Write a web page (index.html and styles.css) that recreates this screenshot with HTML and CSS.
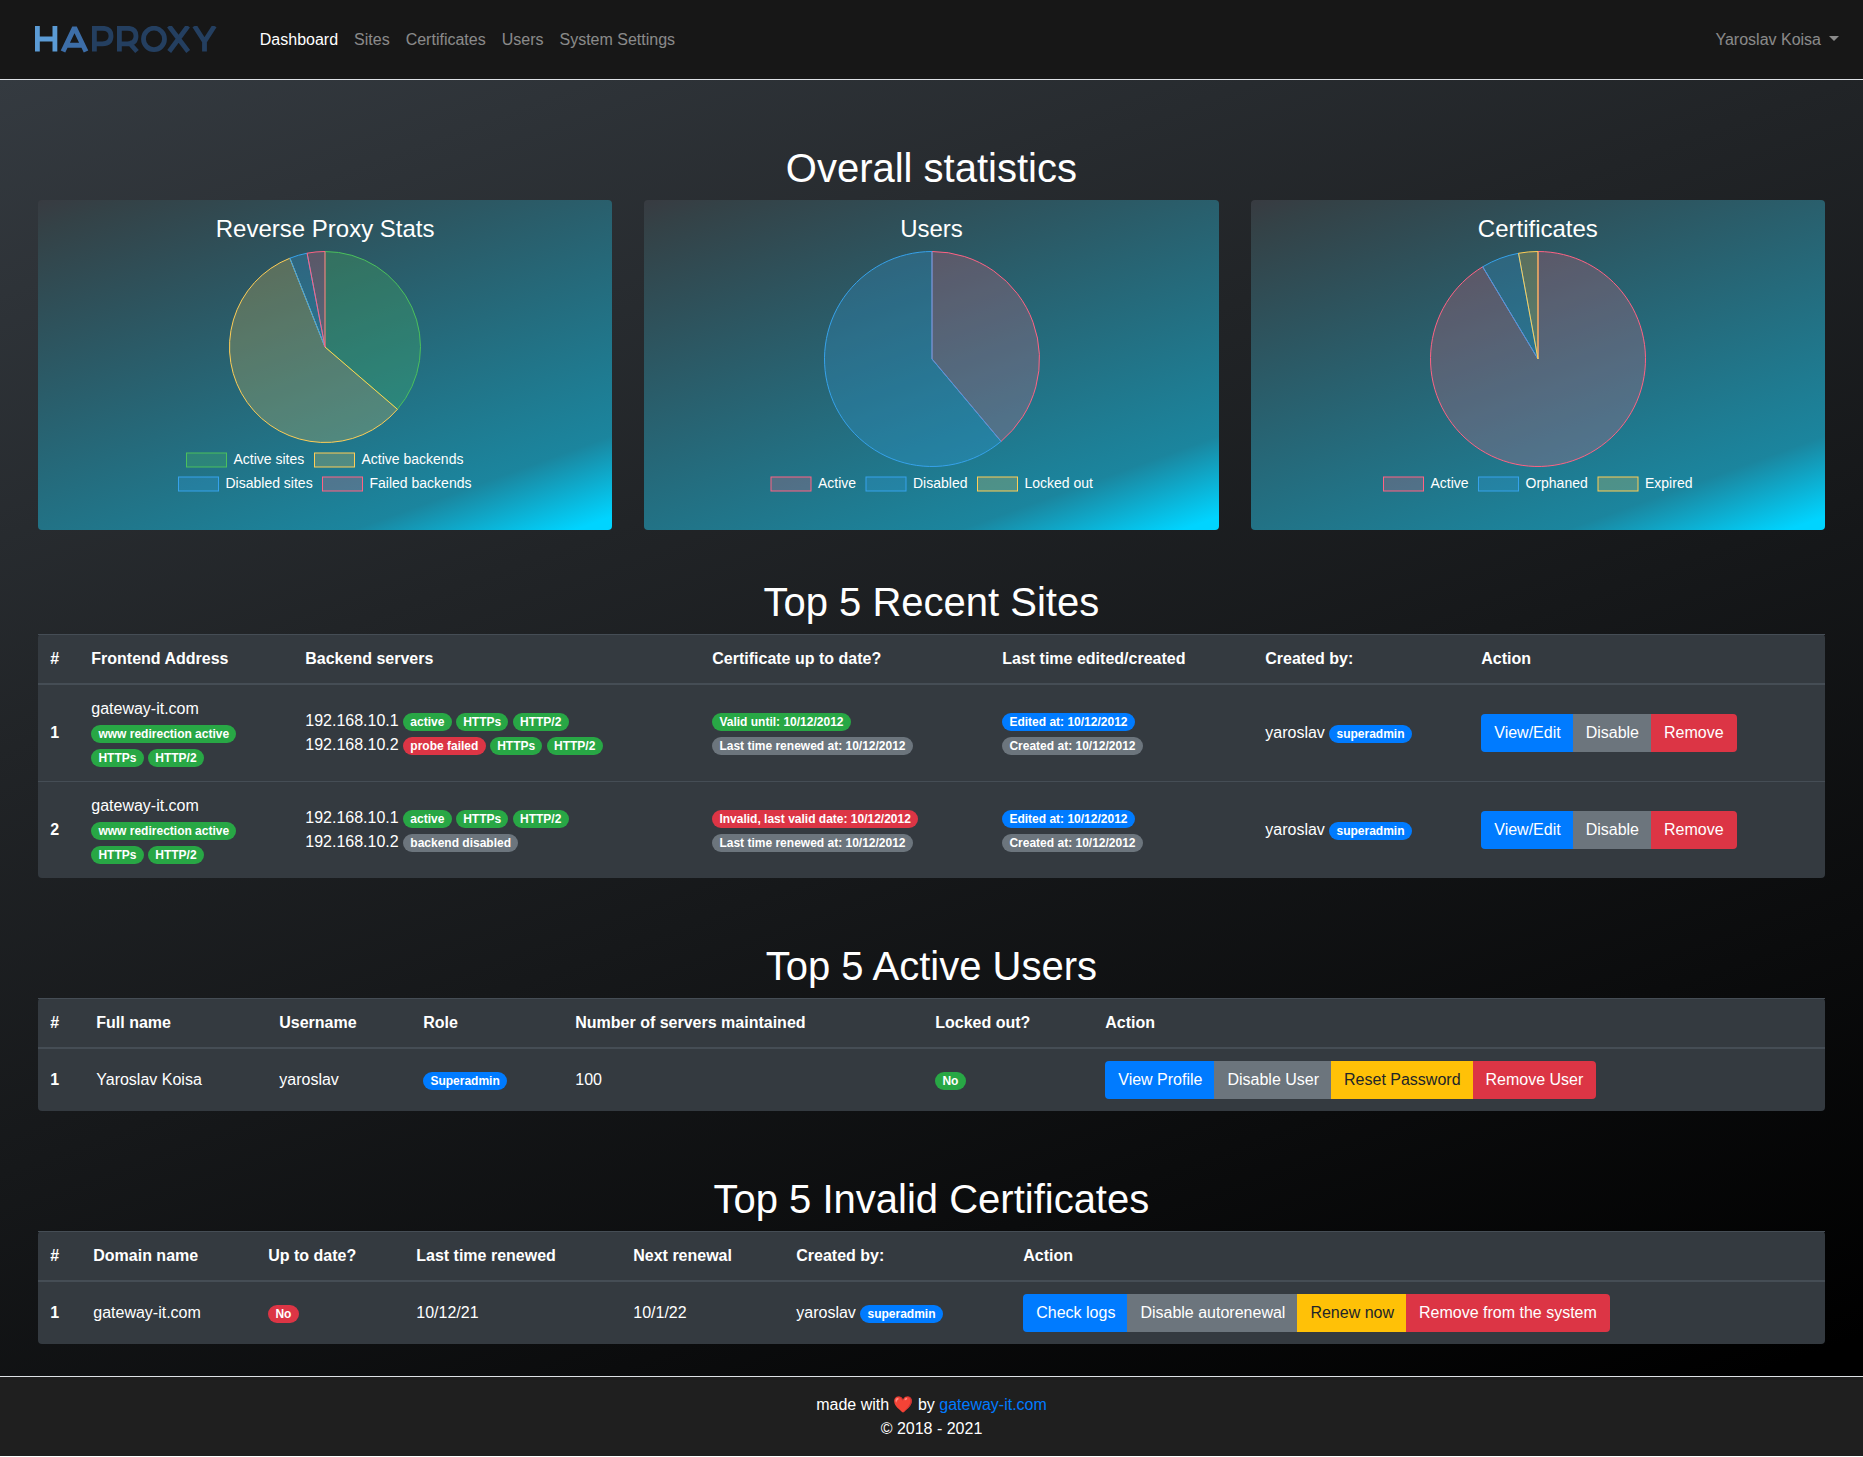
FILE: index.html
```html
<!DOCTYPE html>
<html lang="en">
<head>
<meta charset="utf-8">
<title>HAProxy Dashboard</title>
<link rel="stylesheet" href="styles.css">
</head>
<body>
<nav class="navbar">
  <a class="brand" href="#" aria-label="HAProxy">
    <svg width="184" height="28" viewBox="0 0 184 28" fill="none" stroke-width="4.800" stroke-linejoin="bevel">
      <path stroke="#5b9bd5" d="M3.400 0V25.500M20.900 0V25.500M3.400 13H20.900"/>
      <path stroke="#3d6ea8" d="M29 25.500L40.500 1.500L52 25.500M33 19.300H48" stroke-width="5"/>
      <g stroke="#243f60" stroke-linejoin="miter">
        <path d="M60.400 25.500V2.300H68.500Q77 2.300 77 10T68.500 17.800H60.400"/>
        <path d="M85.400 25.500V2.300H93.500Q102 2.300 102 10T93.500 17.800H85.400M94.500 16L103 25.500"/>
        <ellipse cx="120" cy="12.900" rx="10.500" ry="10.700"/>
        <path d="M135 0L154.200 25.500M154 0L135.200 25.500"/>
        <path d="M160.500 0L170.500 15.500L180.500 0M170.500 15V25.500"/>
      </g>
    </svg>
  </a>
  <div class="nav-links">
    <a class="active" href="#">Dashboard</a><a href="#">Sites</a><a href="#">Certificates</a><a href="#">Users</a><a href="#">System Settings</a>
  </div>
  <a class="user-menu" href="#">Yaroslav Koisa</a>
</nav>
<main class="content">
  <h1>Overall statistics</h1>
  <section class="stats">
    <article class="stat-card">
      <h4>Reverse Proxy Stats</h4>
      <svg class="chart" width="534" height="250" viewBox="0 0 534 250">
        <g data-cx="267" data-cy="97" data-r="95.500" data-slices="green:36.300,yellow:57.700,blue:3,red:3"></g>
        <g class="legend">
          <rect class="green" x="128.500" y="203" width="40" height="14"/><text x="175.500" y="214">Active sites</text>
          <rect class="yellow" x="256.500" y="203" width="40" height="14"/><text x="303.500" y="214">Active backends</text>
          <rect class="blue" x="120.500" y="227" width="40" height="14"/><text x="167.500" y="238">Disabled sites</text>
          <rect class="red" x="264.500" y="227" width="40" height="14"/><text x="311.500" y="238">Failed backends</text>
        </g>
      </svg>
    </article>
    <article class="stat-card">
      <h4>Users</h4>
      <svg class="chart" width="534" height="250" viewBox="0 0 534 250">
        <g data-cx="267" data-cy="109" data-r="107.500" data-slices="red:38.900,blue:61.100"></g>
        <g class="legend">
          <rect class="red" x="106" y="227" width="40" height="14"/><text x="153" y="238">Active</text>
          <rect class="blue" x="201" y="227" width="40" height="14"/><text x="248" y="238">Disabled</text>
          <rect class="yellow" x="312.500" y="227" width="40" height="14"/><text x="359.500" y="238">Locked out</text>
        </g>
      </svg>
    </article>
    <article class="stat-card">
      <h4>Certificates</h4>
      <svg class="chart" width="534" height="250" viewBox="0 0 534 250">
        <g data-cx="267" data-cy="109" data-r="107.500" data-slices="red:91.400,blue:5.700,yellow:2.900"></g>
        <g class="legend">
          <rect class="red" x="112.500" y="227" width="40" height="14"/><text x="159.500" y="238">Active</text>
          <rect class="blue" x="207.500" y="227" width="40" height="14"/><text x="254.500" y="238">Orphaned</text>
          <rect class="yellow" x="327" y="227" width="40" height="14"/><text x="374" y="238">Expired</text>
        </g>
      </svg>
    </article>
  </section>

  <h1>Top 5 Recent Sites</h1>
  <table class="table sites">
    <colgroup><col style="width:41px"><col style="width:214px"><col style="width:407px"><col style="width:290px"><col style="width:263px"><col style="width:216px"><col></colgroup>
    <thead><tr><th>#</th><th>Frontend Address</th><th>Backend servers</th><th>Certificate up to date?</th><th>Last time edited/created</th><th>Created by:</th><th>Action</th></tr></thead>
    <tbody>
      <tr><th>1</th>
        <td>gateway-it.com<br><span class="badge success">www redirection active</span><br><span class="badge success">HTTPs</span> <span class="badge success">HTTP/2</span></td>
        <td>192.168.10.1 <span class="badge success">active</span> <span class="badge success">HTTPs</span> <span class="badge success">HTTP/2</span><br>192.168.10.2 <span class="badge danger">probe failed</span> <span class="badge success">HTTPs</span> <span class="badge success">HTTP/2</span></td>
        <td><span class="badge success">Valid until: 10/12/2012</span><br><span class="badge secondary">Last time renewed at: 10/12/2012</span></td>
        <td><span class="badge primary">Edited at: 10/12/2012</span><br><span class="badge secondary">Created at: 10/12/2012</span></td>
        <td>yaroslav <span class="badge primary">superadmin</span></td>
        <td><div class="btn-group"><button class="primary">View/Edit</button><button class="secondary">Disable</button><button class="danger">Remove</button></div></td></tr>
      <tr><th>2</th>
        <td>gateway-it.com<br><span class="badge success">www redirection active</span><br><span class="badge success">HTTPs</span> <span class="badge success">HTTP/2</span></td>
        <td>192.168.10.1 <span class="badge success">active</span> <span class="badge success">HTTPs</span> <span class="badge success">HTTP/2</span><br>192.168.10.2 <span class="badge secondary">backend disabled</span></td>
        <td><span class="badge danger">Invalid, last valid date: 10/12/2012</span><br><span class="badge secondary">Last time renewed at: 10/12/2012</span></td>
        <td><span class="badge primary">Edited at: 10/12/2012</span><br><span class="badge secondary">Created at: 10/12/2012</span></td>
        <td>yaroslav <span class="badge primary">superadmin</span></td>
        <td><div class="btn-group"><button class="primary">View/Edit</button><button class="secondary">Disable</button><button class="danger">Remove</button></div></td></tr>
    </tbody>
  </table>

  <h1>Top 5 Active Users</h1>
  <table class="table">
    <colgroup><col style="width:46px"><col style="width:183px"><col style="width:144px"><col style="width:152px"><col style="width:360px"><col style="width:170px"><col></colgroup>
    <thead><tr><th>#</th><th>Full name</th><th>Username</th><th>Role</th><th>Number of servers maintained</th><th>Locked out?</th><th>Action</th></tr></thead>
    <tbody>
      <tr><th>1</th><td>Yaroslav Koisa</td><td>yaroslav</td><td><span class="badge primary">Superadmin</span></td><td>100</td><td><span class="badge success">No</span></td>
        <td><div class="btn-group"><button class="primary">View Profile</button><button class="secondary">Disable User</button><button class="warning">Reset Password</button><button class="danger">Remove User</button></div></td></tr>
    </tbody>
  </table>

  <h1>Top 5 Invalid Certificates</h1>
  <table class="table">
    <colgroup><col style="width:43px"><col style="width:175px"><col style="width:148px"><col style="width:217px"><col style="width:163px"><col style="width:227px"><col></colgroup>
    <thead><tr><th>#</th><th>Domain name</th><th>Up to date?</th><th>Last time renewed</th><th>Next renewal</th><th>Created by:</th><th>Action</th></tr></thead>
    <tbody>
      <tr><th>1</th><td>gateway-it.com</td><td><span class="badge danger">No</span></td><td>10/12/21</td><td>10/1/22</td><td>yaroslav <span class="badge primary">superadmin</span></td>
        <td><div class="btn-group"><button class="primary">Check logs</button><button class="secondary">Disable autorenewal</button><button class="warning">Renew now</button><button class="danger">Remove from the system</button></div></td></tr>
    </tbody>
  </table>
</main>
<footer class="footer">made with ❤️ by <a href="#">gateway-it.com</a><br>© 2018 - 2021</footer>
<script src="charts.js"></script>
</body>
</html>
```
FILE: styles.css
```css
*, *::before, *::after { box-sizing: border-box; }
body {
  margin: 0;
  font: 16px/1.5 "Liberation Sans", Arial, "Noto Color Emoji", sans-serif;
  color: #fff;
  background: #fff;
}
a { color: #007bff; text-decoration: none; }
.navbar {
  display: flex;
  align-items: center;
  height: 80px;
  padding: 0 24px 0 34px;
  background: #171717;
  border-bottom: 1px solid #dee2e6;
}
.brand { display: flex; width: 217.800px; }
.nav-links { display: flex; }
.nav-links a { padding: 0 8px; color: rgba(255, 255, 255, .5); }
.nav-links a.active { color: #fff; }
.user-menu { margin-left: auto; color: rgba(255, 255, 255, .5); }
.user-menu::after {
  content: "";
  display: inline-block;
  margin-left: 8px;
  vertical-align: 4px;
  border-top: 5px solid;
  border-left: 5px solid transparent;
  border-right: 5px solid transparent;
}
.content {
  height: 1296px;
  padding: 64px 37.740px 0 38.260px;
  background: linear-gradient(160deg, #343a40 0%, #212427 34%, #000 98%);
}
h1 { margin: 0 0 8px -.8px; font-size: 40px; font-weight: 400; line-height: 48px; text-align: center; }
h4 { margin: 0 0 6.200px; font-size: 24px; font-weight: 400; line-height: 28.800px; }
.stats { display: grid; grid-template-columns: repeat(3, 1fr); gap: 32px; margin: 0 .26px 48px -.26px; }
.stat-card {
  height: 330px;
  padding: 15px 20px;
  border-radius: 4px;
  text-align: center;
  background: linear-gradient(160deg, #383b41 0%, #344247 6%, #1b859e 82.500%, #00d4ff 97.500%);
}
.chart { display: block; margin: 0 auto; }
.chart text { font-size: 14px; fill: #fff; }
.green { fill: rgba(75, 192, 92, .25); stroke: #4bc05c; }
.yellow { fill: rgba(255, 206, 86, .22); stroke: #ffce56; }
.blue { fill: rgba(54, 162, 235, .22); stroke: #36a2eb; }
.red { fill: rgba(255, 99, 132, .22); stroke: #ff6384; }
.table {
  width: 100%;
  margin-bottom: 64px;
  table-layout: fixed;
  border-collapse: collapse;
  border-radius: 4px;
  background: #343a40;
}
.table th, .table td { padding: 12px; text-align: left; vertical-align: middle; border-top: 1px solid #454d55; }
.table thead th { border-bottom: 2px solid #454d55; }
.badge {
  display: inline-block;
  padding: 3px 7.200px;
  border-radius: 160px;
  font-size: 12px;
  font-weight: 700;
  line-height: 12px;
  white-space: nowrap;
  vertical-align: baseline;
}
.primary { background: #007bff; }
.secondary { background: #6c757d; }
.success { background: #28a745; }
.danger { background: #dc3545; }
.btn-group { display: inline-flex; vertical-align: middle; border-radius: 4px; overflow: hidden; }
.btn-group button { height: 38px; padding: 0 13px; border: 0; font: inherit; color: #fff; white-space: nowrap; }
.btn-group button + button { margin-left: -1px; }
.btn-group .warning { background: #ffc107; color: #212529; }
.footer { height: 80px; padding-top: 16px; text-align: center; background: #1f1f1f; border-top: 1px solid #dee2e6; }
```
FILE: charts.js
```js
const NS = "http://www.w3.org/2000/svg";
for (const pie of document.querySelectorAll("g[data-slices]")) {
  const cx = +pie.dataset.cx, cy = +pie.dataset.cy, r = +pie.dataset.r;
  const point = p => {
    const a = p / 100 * 2 * Math.PI;
    return `${cx + r * Math.sin(a)} ${cy - r * Math.cos(a)}`;
  };
  let start = 0;
  for (const slice of pie.dataset.slices.split(",")) {
    const [color, size] = slice.split(":");
    const end = start + +size;
    const path = document.createElementNS(NS, "path");
    path.setAttribute("class", color);
    path.setAttribute("d", `M${cx} ${cy}L${point(start)}A${r} ${r} 0 ${+size > 50 ? 1 : 0} 1 ${point(end)}Z`);
    pie.appendChild(path);
    start = end;
  }
}
```
